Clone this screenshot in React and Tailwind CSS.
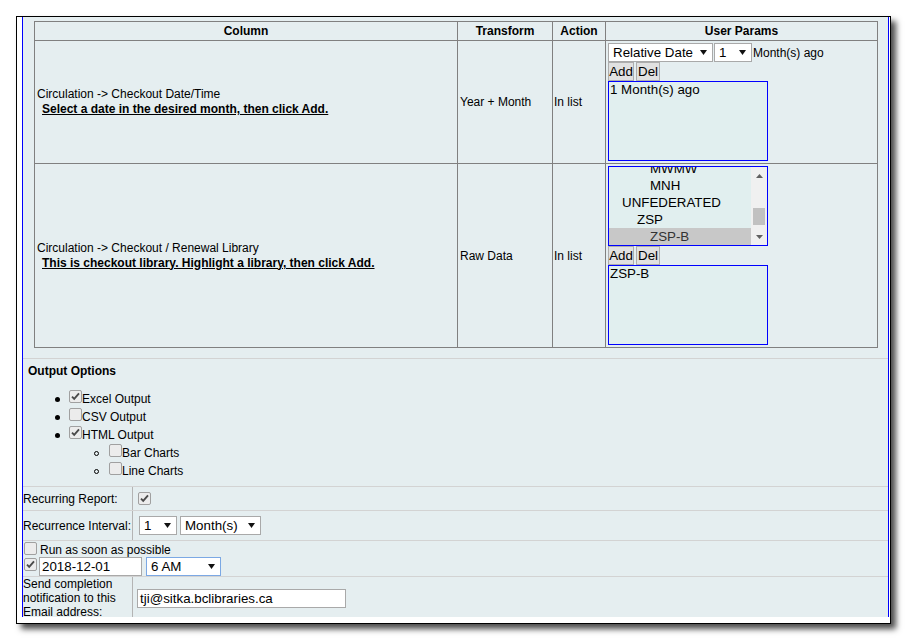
import React from "react";

function Arrow() {
  return (
    <svg width="7" height="5" viewBox="0 0 7 5" className="block shrink-0">
      <path d="M0 0H7L3.5 5Z" fill="#111" />
    </svg>
  );
}

function Select({ className = "", text, focus = false }) {
  return (
    <div
      className={`h-[19px] shrink-0 bg-white border ${
        focus ? "border-[#7ba8e4]" : "border-[#a9a9a9]"
      } flex items-center justify-between pl-[4px] pr-[5px] text-[13.333px] leading-[15px] whitespace-nowrap ${className}`}
    >
      <span>{text}</span>
      <Arrow />
    </div>
  );
}

function Checkbox({ checked = false, className = "" }) {
  return (
    <div
      className={`w-[13px] h-[13px] shrink-0 rounded-[2px] border border-[#a0a0a0] bg-[#ececec] flex items-center justify-center ${className}`}
    >
      {checked && (
        <svg width="11" height="11" viewBox="0 0 11 11" className="block">
          <path d="M2 5.6L4.2 7.8L9 2.4" fill="none" stroke="#4a4a4a" strokeWidth="1.9" />
        </svg>
      )}
    </div>
  );
}

function Button({ children, className = "" }) {
  return (
    <div
      className={`h-[19px] shrink-0 border border-[#adadad] bg-[#e1e1e1] flex items-center justify-center text-[13.333px] leading-[15px] ${className}`}
    >
      {children}
    </div>
  );
}

function TextInput({ value, className = "" }) {
  return (
    <div
      className={`h-[19px] shrink-0 bg-white border border-[#a9a9a9] flex items-center pl-[2px] text-[13.333px] leading-[15px] whitespace-nowrap ${className}`}
    >
      {value}
    </div>
  );
}

function Box({ children }) {
  return (
    <div className="w-[160px] h-[80px] shrink-0 border border-[#0000ff] bg-[#e1efef] pl-[1px] text-[13.333px] leading-[15px]">
      {children}
    </div>
  );
}

function AddDel() {
  return (
    <div className="flex h-[19px] shrink-0">
      <Button className="w-[26px]">Add</Button>
      <Button className="w-[24px] ml-[2px]">Del</Button>
    </div>
  );
}

function ListBox() {
  return (
    <div className="w-[160px] h-[80px] shrink-0 border border-[#0000ff] bg-[#e1efef] flex overflow-hidden">
      <div className="flex-1 overflow-hidden text-[13.333px] leading-[17px]">
        <div className="-mt-[7px]">
          <div className="h-[17px] pl-[41px]">MWMW</div>
          <div className="h-[17px] pl-[41px]">MNH</div>
          <div className="h-[17px] pl-[13px]">UNFEDERATED</div>
          <div className="h-[17px] pl-[28px]">ZSP</div>
          <div className="h-[17px] pl-[41px] bg-[#c8c8c8] text-[#333333]">ZSP-B</div>
        </div>
      </div>
      <div className="w-[16px] bg-[#f0f0f0] flex flex-col">
        <div className="h-[17px] flex items-center justify-center">
          <svg width="7" height="4" viewBox="0 0 7 4" className="block">
            <path d="M0 4L3.5 0L7 4Z" fill="#606060" />
          </svg>
        </div>
        <div className="flex-1">
          <div className="mt-[24px] mx-[2px] h-[17px] bg-[#c1c1c1]" />
        </div>
        <div className="h-[17px] flex items-center justify-center">
          <svg width="7" height="4" viewBox="0 0 7 4" className="block">
            <path d="M0 0L3.5 4L7 0Z" fill="#606060" />
          </svg>
        </div>
      </div>
    </div>
  );
}

function Bullet({ circle = false }) {
  return circle ? (
    <div className="w-[5px] h-[5px] shrink-0 rounded-full border border-black self-center" />
  ) : (
    <div className="w-[5px] h-[5px] shrink-0 rounded-full bg-black self-center" />
  );
}

export default function App() {
  const cell = "border-r border-b border-[#808080]";
  return (
    <div className="w-[909px] h-[642px] bg-white pt-[16px] pl-[16px] font-['Liberation_Sans',Arial,sans-serif] text-black">
      <div className="w-[875px] h-[608px] border border-black bg-white shadow-[5px_5px_6px_rgba(0,0,0,0.7)] flex flex-col overflow-hidden">
        <div className="h-[600px] shrink-0 flex">
          <div className="w-[5px] bg-white" />
          <div className="w-[1px] bg-[#0000ff]" />
          <div className="w-[865px] bg-[#e5eef0] flex flex-col overflow-hidden">
            {/* Columns table */}
            <div className="h-[342px] shrink-0 border-b border-[#d3d3d3] pt-[4px] pl-[11px]">
              <div className="w-[844px] border-l border-t border-[#808080] grid grid-cols-[423px_95px_53px_272px] grid-rows-[19px_123px_184px] text-[12px]">
                <div className={`${cell} flex items-center justify-center font-bold leading-[14px]`}>Column</div>
                <div className={`${cell} flex items-center justify-center font-bold leading-[14px]`}>Transform</div>
                <div className={`${cell} flex items-center justify-center font-bold leading-[14px]`}>Action</div>
                <div className={`${cell} flex items-center justify-center font-bold leading-[14px]`}>User Params</div>

                <div className={`${cell} flex flex-col justify-center pl-[2px] leading-[15px]`}>
                  <div>{"Circulation -> Checkout Date/Time"}</div>
                  <div className="ml-[5px] font-bold underline">Select a date in the desired month, then click Add.</div>
                </div>
                <div className={`${cell} flex items-center pl-[2px] leading-[14px]`}>Year + Month</div>
                <div className={`${cell} flex items-center pl-[1px] leading-[14px]`}>In list</div>
                <div className={`${cell} flex flex-col pt-[2px] pl-[2px]`}>
                  <div className="flex items-center h-[19px]">
                    <Select className="w-[105px]" text="Relative Date" />
                    <Select className="w-[38px] ml-[1px]" text="1" />
                    <span className="ml-[1px] leading-[14px] whitespace-nowrap">Month(s) ago</span>
                  </div>
                  <AddDel />
                  <Box>1 Month(s) ago</Box>
                </div>

                <div className={`${cell} flex flex-col justify-center pl-[2px] leading-[15px]`}>
                  <div>{"Circulation -> Checkout / Renewal Library"}</div>
                  <div className="ml-[5px] font-bold underline">This is checkout library. Highlight a library, then click Add.</div>
                </div>
                <div className={`${cell} flex items-center pl-[2px] leading-[14px]`}>Raw Data</div>
                <div className={`${cell} flex items-center pl-[1px] leading-[14px]`}>In list</div>
                <div className={`${cell} flex flex-col pt-[2px] pl-[2px]`}>
                  <ListBox />
                  <AddDel />
                  <Box>ZSP-B</Box>
                </div>
              </div>
            </div>

            {/* Output options */}
            <div className="h-[128px] shrink-0 border-b border-[#d3d3d3] pt-[5px] text-[12px]">
              <div className="pl-[5px] font-bold leading-[14px]">Output Options</div>
              <div className="mt-[12px] flex flex-col leading-[18px]">
                <div className="h-[18px] flex items-start pl-[32px]">
                  <Bullet />
                  <Checkbox checked className="ml-[9px]" />
                  <span>Excel Output</span>
                </div>
                <div className="h-[18px] flex items-start pl-[32px]">
                  <Bullet />
                  <Checkbox className="ml-[9px]" />
                  <span>CSV Output</span>
                </div>
                <div className="h-[18px] flex items-start pl-[32px]">
                  <Bullet />
                  <Checkbox checked className="ml-[9px]" />
                  <span>HTML Output</span>
                </div>
                <div className="h-[18px] flex items-start pl-[71px]">
                  <Bullet circle />
                  <Checkbox className="ml-[10px]" />
                  <span>Bar Charts</span>
                </div>
                <div className="h-[18px] flex items-start pl-[71px]">
                  <Bullet circle />
                  <Checkbox className="ml-[10px]" />
                  <span>Line Charts</span>
                </div>
              </div>
            </div>

            {/* Recurring report */}
            <div className="h-[24px] shrink-0 border-b border-[#d3d3d3] flex text-[12px] leading-[14px]">
              <div className="w-[110px] shrink-0 border-r border-[#b4b4b4] flex items-center">Recurring Report:</div>
              <div className="flex items-center pl-[5px]">
                <Checkbox checked />
              </div>
            </div>

            {/* Recurrence interval */}
            <div className="h-[30px] shrink-0 border-b border-[#d3d3d3] flex text-[12px] leading-[14px]">
              <div className="w-[110px] shrink-0 border-r border-[#b4b4b4] flex items-center whitespace-nowrap">Recurrence Interval:</div>
              <div className="flex items-center pl-[6px]">
                <Select className="w-[38px]" text="1" />
                <Select className="w-[81px] ml-[3px]" text="Month(s)" />
              </div>
            </div>

            {/* Run as soon as possible */}
            <div className="h-[36px] shrink-0 border-b border-[#d3d3d3] flex flex-col text-[12px] leading-[14px]">
              <div className="h-[16px] flex items-start">
                <Checkbox className="ml-[1px] mt-[1px]" />
                <span className="ml-[3px] mt-[2px]">Run as soon as possible</span>
              </div>
              <div className="h-[19px] flex items-start">
                <Checkbox checked className="ml-[1px] mt-[1px]" />
                <TextInput className="w-[103px] ml-[2px]" value="2018-12-01" />
                <Select className="w-[75px] ml-[4px]" text="6 AM" focus />
              </div>
            </div>

            {/* Email */}
            <div className="h-[42px] shrink-0 flex text-[12px] leading-[14px]">
              <div className="w-[110px] shrink-0 border-r border-[#b4b4b4]">
                Send completion notification to this Email address:
              </div>
              <div className="flex items-center pl-[4px]">
                <TextInput className="w-[209px]" value="tji@sitka.bclibraries.ca" />
              </div>
            </div>
          </div>
          <div className="w-[1px] bg-[#0000ff]" />
          <div className="w-[1px] bg-white" />
        </div>
      </div>
    </div>
  );
}
